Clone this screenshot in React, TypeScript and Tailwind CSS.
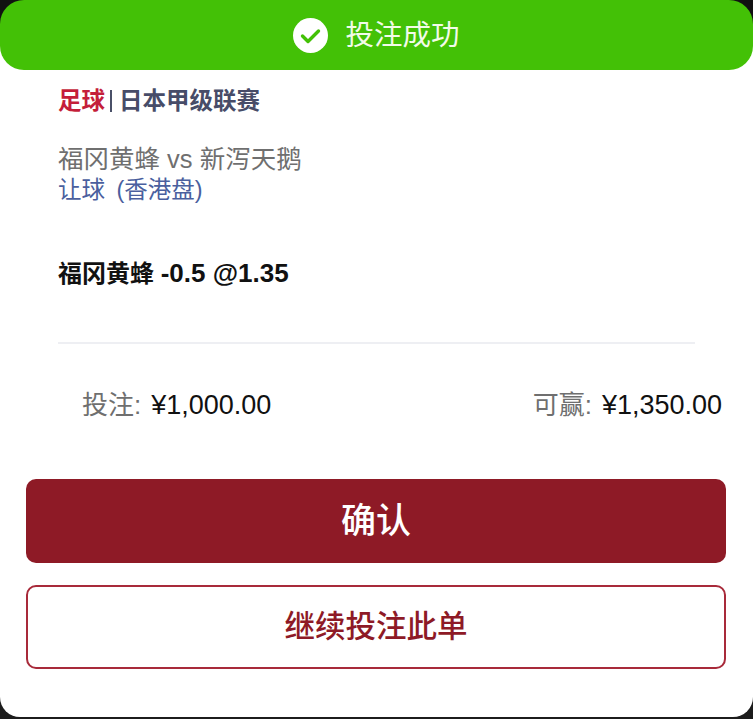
const font = "font-['Liberation_Sans','Noto_Sans_CJK_SC',sans-serif]"

function CheckBadge() {
  return (
    <svg width="35" height="35" viewBox="0 0 35 35" className="shrink-0">
      <circle cx="17.5" cy="17.5" r="17.5" fill="#fff" />
      <path d="M9.5 18l5.5 5.5 10.5-10.5" fill="none" stroke="#43c106" strokeWidth="3.4" strokeLinecap="round" strokeLinejoin="round" />
    </svg>
  )
}

export default function App() {
  return (
    <div className={`w-[753px] h-[719px] overflow-hidden bg-[#1c1c1c] ${font}`}>
      <div className="h-[717px] bg-white rounded-b-[20px] flex flex-col">
        {/* Success banner, dark behind the top corners and white behind the bottom ones */}
        <div className="h-[70px] shrink-0 bg-[linear-gradient(#111111_50%,#ffffff_50%)]">
          <div className="h-full bg-[#43c106] rounded-[24px] flex items-center justify-center gap-[17px]">
            <CheckBadge />
            <span className="text-[28.5px] leading-none text-[#f2fbe9]">投注成功</span>
          </div>
        </div>

        {/* League */}
        <div className="pl-[58px] pt-[18px] flex items-center text-[23.5px] leading-[26px] font-bold">
          <span className="text-[#c41e3a]">足球</span>
          <span className="w-[2px] h-[22px] bg-[#4a5068] ml-[5px] mr-[7px]" />
          <span className="text-[#474c68]">日本甲级联赛</span>
        </div>

        {/* Match */}
        <div className="pl-[58px] pt-[29px] text-[25.5px] leading-[32px] text-[#6f6f6f]">福冈黄蜂 vs 新泻天鹅</div>
        <div className="pl-[58px] text-[23.5px] leading-[30px] text-[#4a5f9e] [word-spacing:5px]">让球 (香港盘)</div>

        {/* Selection */}
        <div className="pl-[58px] pt-[52px] text-[24px] leading-[32px] font-bold text-[#111]">
          福冈黄蜂 <span className="text-[26px]">-0.5 @1.35</span>
        </div>

        <div className="mt-[52px] ml-[58px] w-[637px] h-[2px] bg-[#eeeff3]" />

        {/* Amounts */}
        <div className="pl-[82px] pr-[31px] pt-[44px] flex justify-between items-baseline leading-[34px]">
          <div className="flex items-baseline gap-[10px]">
            <span className="text-[26px] text-[#6f6f6f]">投注:</span>
            <span className="text-[27px] text-[#111]">¥1,000.00</span>
          </div>
          <div className="flex items-baseline gap-[10px]">
            <span className="text-[26px] text-[#6f6f6f]">可赢:</span>
            <span className="text-[27px] text-[#111]">¥1,350.00</span>
          </div>
        </div>

        {/* Actions */}
        <div className="pl-[26px] pr-[27px] pt-[57px] flex flex-col gap-[22px]">
          <button className="h-[84px] rounded-[10px] bg-[#8e1a26] text-white text-[35px] font-medium">确认</button>
          <button className="h-[84px] rounded-[10px] bg-white border-2 border-[#a82a3a] text-[#8e1a26] text-[30.5px] font-medium">继续投注此单</button>
        </div>
      </div>
    </div>
  )
}
